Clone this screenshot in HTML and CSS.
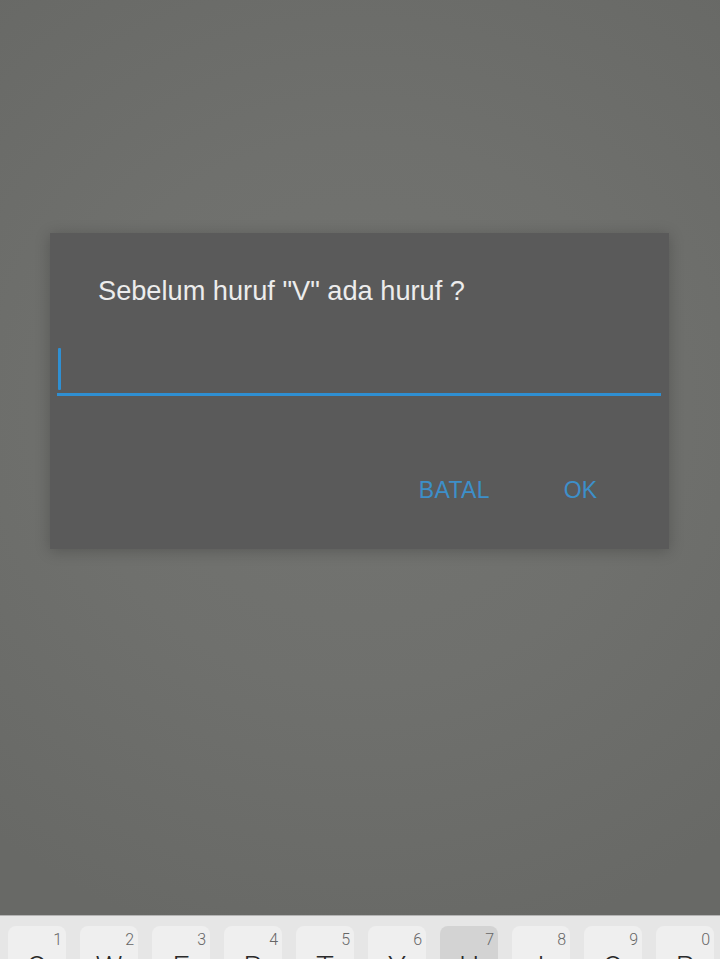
FILE: index.html
```html
<!DOCTYPE html>
<html lang="id">
<head>
<meta charset="utf-8">
<title>Dialog</title>
<link rel="stylesheet" href="styles.css">
</head>
<body>
<div class="screen">
  <main class="scrim">
    <section class="dialog">
      <p class="dialog-title">Sebelum huruf "V" ada huruf ?</p>
      <div class="field">
        <span class="caret"></span>
      </div>
      <div class="actions">
        <span class="btn btn-cancel">BATAL</span>
        <span class="btn">OK</span>
      </div>
    </section>
  </main>
  <footer class="keyboard">
    <div class="key"><span class="num">1</span><span class="letter">Q</span></div>
    <div class="key"><span class="num">2</span><span class="letter">W</span></div>
    <div class="key"><span class="num">3</span><span class="letter">E</span></div>
    <div class="key"><span class="num">4</span><span class="letter">R</span></div>
    <div class="key"><span class="num">5</span><span class="letter">T</span></div>
    <div class="key"><span class="num">6</span><span class="letter">Y</span></div>
    <div class="key pressed"><span class="num">7</span><span class="letter">U</span></div>
    <div class="key"><span class="num">8</span><span class="letter">I</span></div>
    <div class="key"><span class="num">9</span><span class="letter">O</span></div>
    <div class="key"><span class="num">0</span><span class="letter">P</span></div>
  </footer>
</div>
</body>
</html>
```
FILE: styles.css
```css
* { box-sizing: border-box; }
html, body { margin: 0; padding: 0; }
body {
  font-family: "Liberation Sans", Arial, sans-serif;
  width: 720px;
  height: 959px;
  overflow: hidden;
}
.screen {
  display: flex;
  flex-direction: column;
  height: 959px;
}
.scrim {
  flex: 1;
  background: radial-gradient(ellipse 80% 60% at 50% 45%, #737471 0%, #6f706d 50%, #686966 100%);
  padding: 233px 51px 0 50px;
}
.dialog {
  width: 619px;
  height: 316px;
  background: #5a5a5a;
  box-shadow: 0 2px 14px rgba(0, 0, 0, 0.22);
  padding: 42px 8px 0 7px;
  display: flex;
  flex-direction: column;
}
.dialog-title {
  margin: 0 0 0 41px;
  font-size: 27.2px;
  line-height: 31px;
  color: #ececec;
}
.field {
  margin-top: 42px;
  height: 48px;
  border-bottom: 3px solid #2f8fd2;
  display: flex;
  flex-direction: column;
}
.caret {
  width: 3px;
  height: 42px;
  margin-left: 1px;
  background: #2f8fd2;
  border-radius: 1px;
}
.actions {
  margin-top: 81px;
  display: flex;
  justify-content: flex-end;
  align-items: baseline;
  gap: 74px;
  padding-right: 64px;
}
.btn {
  font-size: 23px;
  line-height: 26px;
  color: #3d8fc9;
}
.btn-cancel {
  letter-spacing: 0.3px;
}
.keyboard {
  height: 44px;
  flex: none;
  background: #e6e6e6;
  border-top: 1px solid #b4b4b4;
  display: flex;
  gap: 14px;
  padding: 10px 0 0 8px;
  overflow: hidden;
}
.key {
  flex: none;
  width: 58px;
  height: 64px;
  background: #efefef;
  border-radius: 8px;
  display: flex;
  flex-direction: column;
  padding: 6px 4px 0;
}
.key.pressed { background: #d3d3d3; }
.num {
  align-self: flex-end;
  font-family: "Roboto", "Liberation Sans", sans-serif;
  font-weight: 300;
  font-size: 16px;
  line-height: 16px;
  color: #666666;
}
.letter {
  margin-top: 4px;
  text-align: center;
  font-family: "Roboto", "Liberation Sans", sans-serif;
  font-weight: 300;
  font-size: 30px;
  line-height: 30px;
  color: #2a2a2a;
}
```
